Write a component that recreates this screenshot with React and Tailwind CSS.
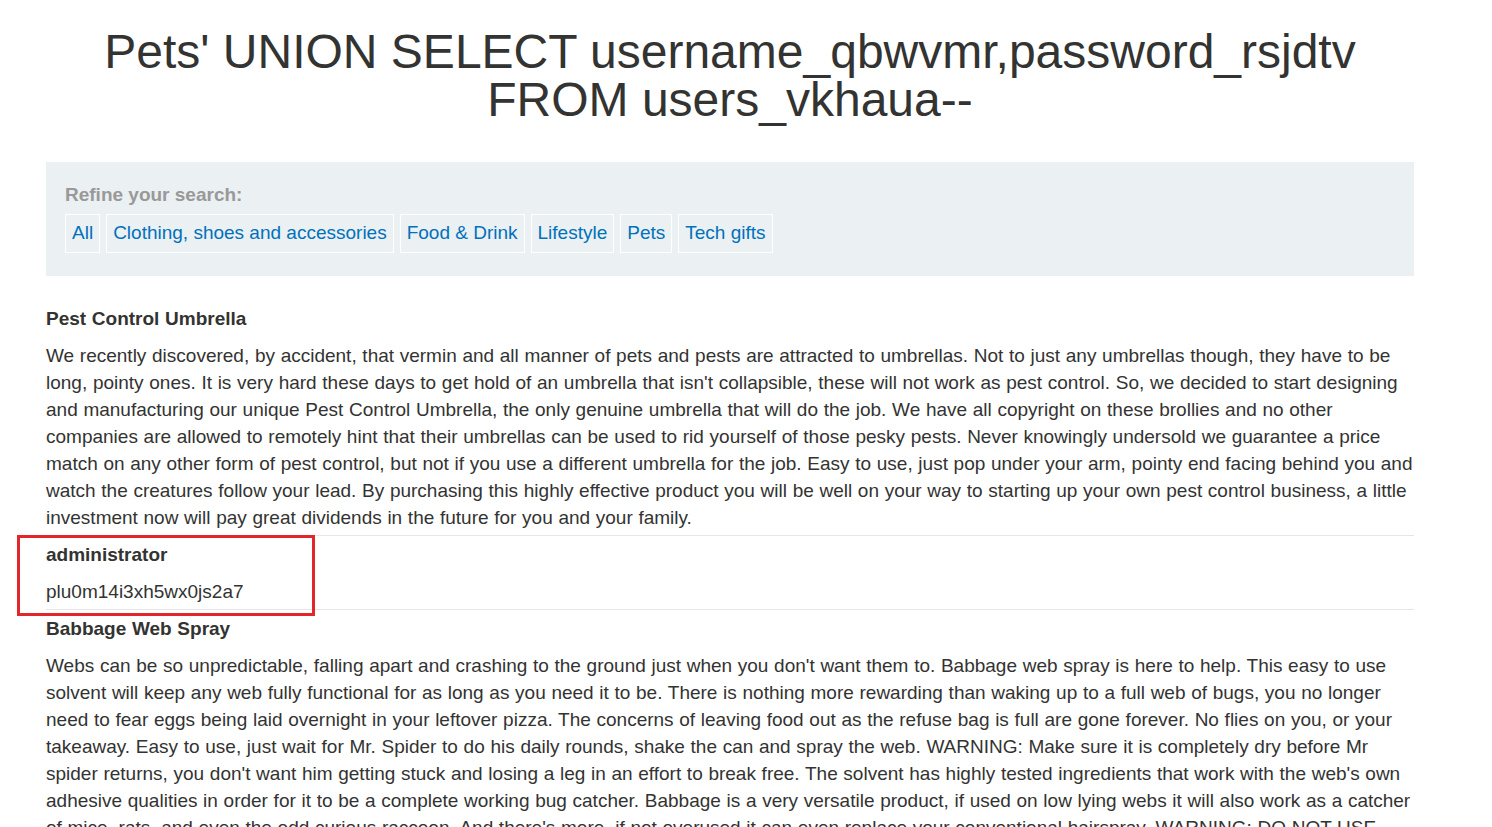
import React from 'react';

const filters = ['All', 'Clothing, shoes and accessories', 'Food & Drink', 'Lifestyle', 'Pets', 'Tech gifts'];

const rows = [
    {
        title: 'Pest Control Umbrella',
        body: "We recently discovered, by accident, that vermin and all manner of pets and pests are attracted to umbrellas. Not to just any umbrellas though, they have to be long, pointy ones. It is very hard these days to get hold of an umbrella that isn't collapsible, these will not work as pest control. So, we decided to start designing and manufacturing our unique Pest Control Umbrella, the only genuine umbrella that will do the job. We have all copyright on these brollies and no other companies are allowed to remotely hint that their umbrellas can be used to rid yourself of those pesky pests. Never knowingly undersold we guarantee a price match on any other form of pest control, but not if you use a different umbrella for the job. Easy to use, just pop under your arm, pointy end facing behind you and watch the creatures follow your lead. By purchasing this highly effective product you will be well on your way to starting up your own pest control business, a little investment now will pay great dividends in the future for you and your family.",
    },
    {
        title: 'administrator',
        body: 'plu0m14i3xh5wx0js2a7',
        boxed: true,
    },
    {
        title: 'Babbage Web Spray',
        body: "Webs can be so unpredictable, falling apart and crashing to the ground just when you don't want them to. Babbage web spray is here to help. This easy to use solvent will keep any web fully functional for as long as you need it to be. There is nothing more rewarding than waking up to a full web of bugs, you no longer need to fear eggs being laid overnight in your leftover pizza. The concerns of leaving food out as the refuse bag is full are gone forever. No flies on you, or your takeaway. Easy to use, just wait for Mr. Spider to do his daily rounds, shake the can and spray the web. WARNING: Make sure it is completely dry before Mr spider returns, you don't want him getting stuck and losing a leg in an effort to break free. The solvent has highly tested ingredients that work with the web's own adhesive qualities in order for it to be a complete working bug catcher. Babbage is a very versatile product, if used on low lying webs it will also work as a catcher of mice, rats, and even the odd curious raccoon. And there's more, if not overused it can even replace your conventional hairspray. WARNING: DO NOT USE WHILE STANDING UNDERNEATH THE WEB.",
    },
];

function App() {
    return (
        <div className="h-screen overflow-hidden bg-white text-[#333332] font-['Liberation_Sans',Arial,sans-serif]">
            <div className="mx-[46px] w-[1368px]">
                {/* page title */}
                <h1 className="pt-[28px] text-center text-[48px] leading-[48px] text-[#333332]">
                    Pets' UNION SELECT username_qbwvmr,password_rsjdtv FROM users_vkhaua--
                </h1>

                {/* filter panel */}
                <section className="mt-[38px] bg-[#ebf0f2] px-[19px] pt-[22px] pb-[23px]">
                    <div className="text-[19px] font-bold leading-[22px] text-[#999999] mb-[8px]">Refine your search:</div>
                    <div className="flex gap-[6px]">
                        {filters.map((f) => (
                            <a key={f} href="#" className="border border-white px-[6px] h-[39px] flex items-center text-[19px] text-[#0071bc]">
                                {f}
                            </a>
                        ))}
                    </div>
                </section>

                {/* product table */}
                <div className="mt-[24px] text-[19px] [word-spacing:0.4px]">
                    {rows.map((r) => (
                        <div key={r.title} className="relative border-b border-[#e6e6e6] last:border-b-0">
                            {r.boxed && (
                                <div className="absolute left-[-29px] top-[-1px] w-[298px] h-[81px] border-[3px] border-[#e3262c] pointer-events-none" />
                            )}
                            <div className="font-bold leading-[27px] pt-[5px]">{r.title}</div>
                            <p className="mt-[10px] leading-[27px] pb-[4px]">{r.body}</p>
                        </div>
                    ))}
                </div>
            </div>
        </div>
    );
}

export default App;
